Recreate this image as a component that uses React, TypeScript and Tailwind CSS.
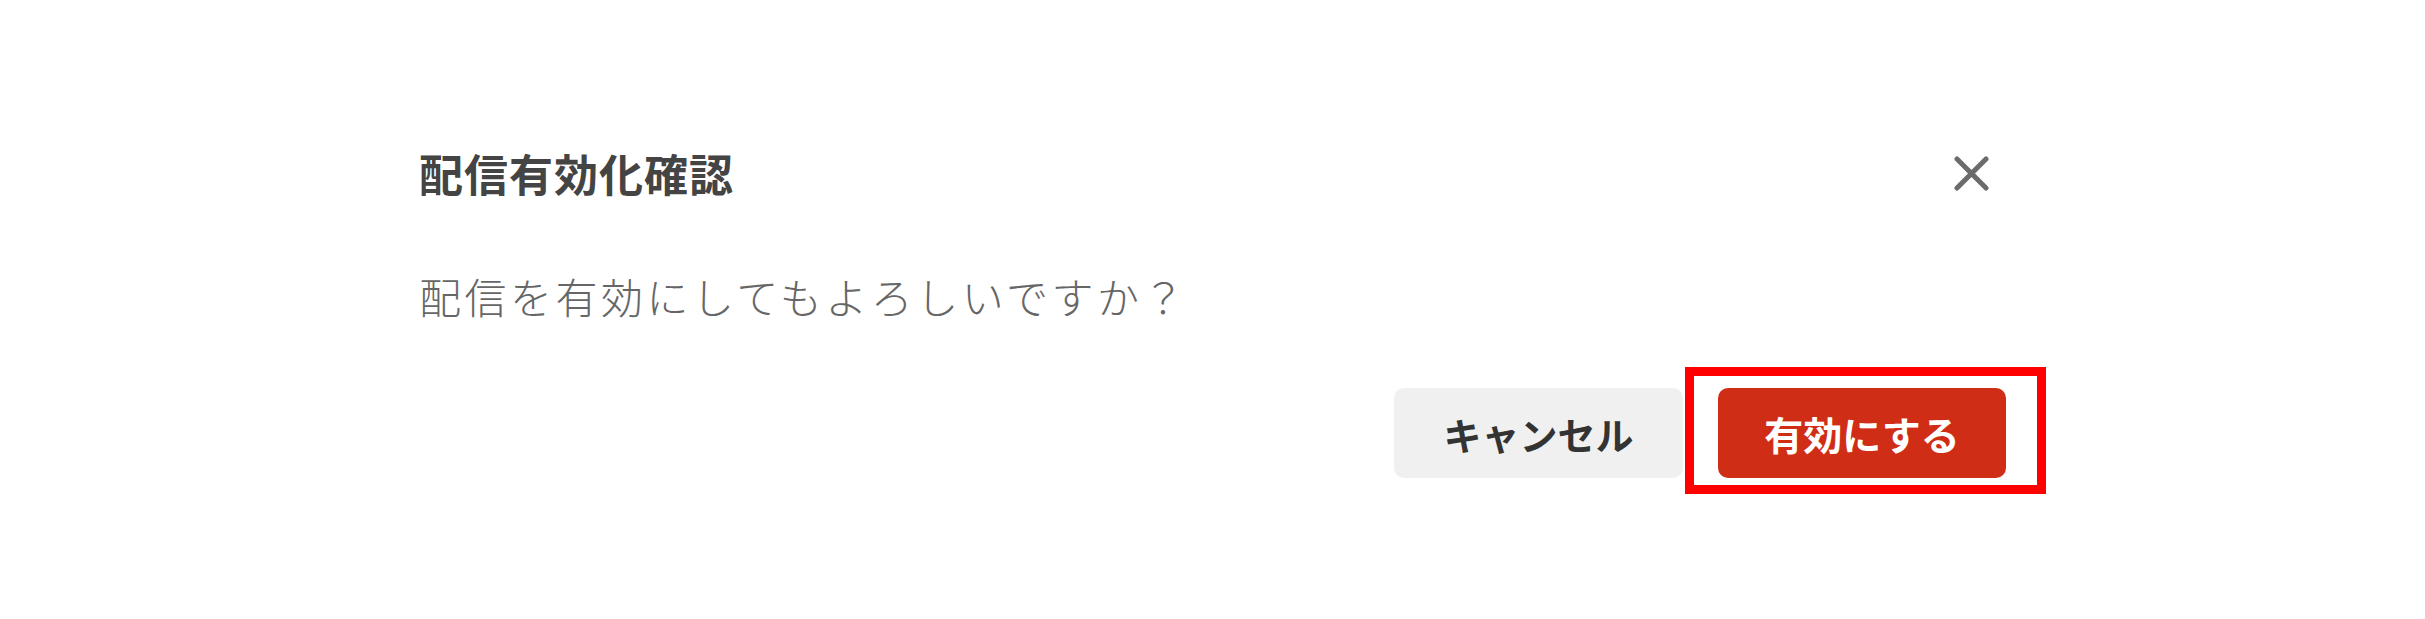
const jp = { fontFamily: '"Noto Sans CJK JP", "Noto Sans", sans-serif' };

function CloseIcon() {
  return (
    <svg width="35" height="35" viewBox="0 0 35 35" aria-hidden>
      <path
        d="M3 3 L32 32 M32 3 L3 32"
        stroke="#6b6b6b"
        strokeWidth="5"
        strokeLinecap="round"
      />
    </svg>
  );
}

export default function App() {
  return (
    <div className="w-full h-[619px] bg-white flex justify-center" style={jp}>
      <div className="w-[1584px] ml-[3px] pt-[138px]">
        <div className="h-[70px] flex items-center justify-between">
          <h2 className="text-[44px] font-bold tracking-[1px] text-[#444444] leading-none -ml-[3px]">
            配信有効化確認
          </h2>
          <button type="button" className="mr-[17px] flex items-center">
            <CloseIcon />
          </button>
        </div>

        <div className="mt-[53px] h-[70px] flex items-center -ml-[3px]">
          <p className="text-[42px] font-light tracking-[3.5px] text-[#666666] leading-none">
            配信を有効にしてもよろしいですか？
          </p>
        </div>

        <div className="mt-[57px] flex justify-end gap-[35px]">
          <button
            type="button"
            className="w-[289px] h-[90px] rounded-[10px] bg-[#f0f0f0] text-[38px] font-semibold text-[#333333] flex items-center justify-center"
          >
            キャンセル
          </button>
          <div className="relative">
            <button
              type="button"
              className="w-[288px] h-[90px] rounded-[10px] bg-[#d02d16] text-[39px] font-bold text-white flex items-center justify-center"
            >
              有効にする
            </button>
            <span className="absolute -left-[33px] -right-[40px] -top-[21px] -bottom-[16px] border-[9px] border-[#ff0000] pointer-events-none" />
          </div>
        </div>
      </div>
    </div>
  );
}
